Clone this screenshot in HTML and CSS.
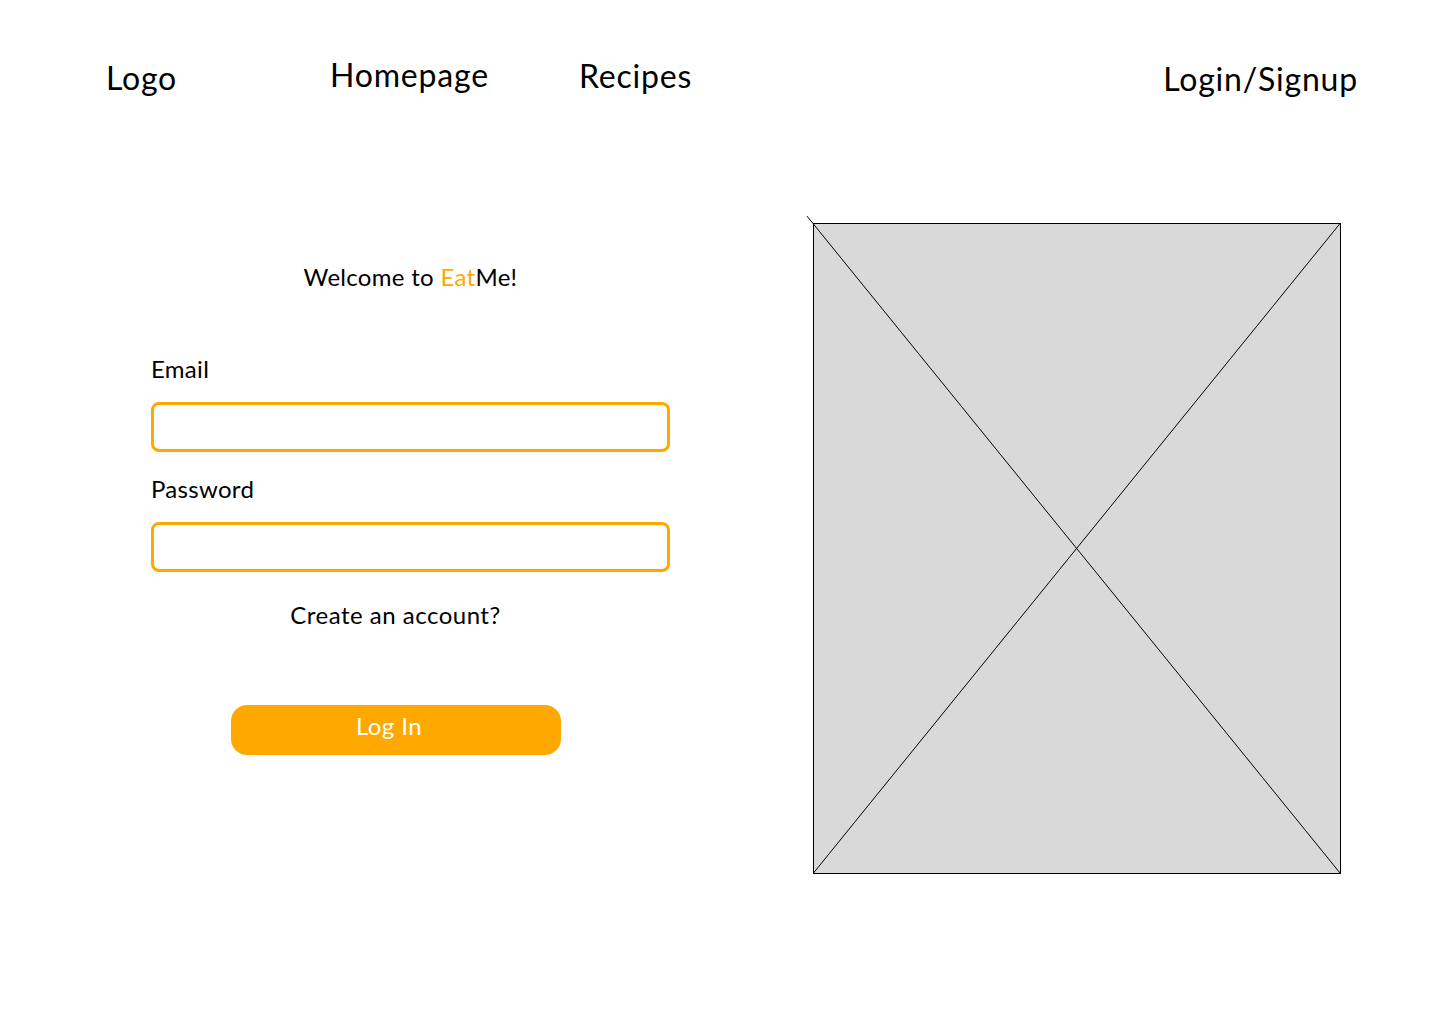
FILE: index.html
```html
<!DOCTYPE html>
<html lang="en">
<head>
<meta charset="utf-8">
<title>EatMe - Login</title>
<link rel="stylesheet" href="styles.css">
</head>
<body>
<header class="topbar">
  <a class="nav-item logo" href="#">Logo</a>
  <a class="nav-item home" href="#">Homepage</a>
  <a class="nav-item recipes" href="#">Recipes</a>
  <a class="nav-item login" href="#">Login/Signup</a>
</header>
<main class="content">
  <section class="form-col">
    <h1 class="welcome">Welcome to <span class="brand">Eat</span>Me!</h1>
    <form class="login-form">
      <label class="field-label" for="email">Email</label>
      <input class="field-input" id="email" type="email">
      <label class="field-label" for="password">Password</label>
      <input class="field-input" id="password" type="password">
      <div class="actions">
        <a class="create-link" href="#">Create an account?</a>
        <button class="login-btn" type="button">Log In</button>
      </div>
    </form>
  </section>
  <section class="image-col">
    <svg class="placeholder" width="528" height="651" viewBox="0 0 528 651">
      <rect x="0.5" y="0.5" width="527" height="650" fill="#D9D9D9" stroke="#000" stroke-width="1"/>
      <line x1="-6" y1="-6.9" x2="527" y2="650" stroke="#000" stroke-width="1"/>
      <line x1="527" y1="0.5" x2="0.5" y2="650" stroke="#000" stroke-width="1"/>
    </svg>
  </section>
</main>
</body>
</html>
```
FILE: styles.css
```css
html, body {
  margin: 0;
  padding: 0;
  background: #fff;
}
body {
  font-family: "Lato", "Open Sans", sans-serif;
  color: #000;
  width: 1440px;
  height: 1024px;
  overflow: hidden;
}
a { color: inherit; text-decoration: none; }

.topbar {
  display: flex;
  align-items: flex-start;
  padding: 56px 83px 0 106px;
  height: 150px;
  box-sizing: border-box;
}
.nav-item {
  font-size: 32px;
  line-height: 44px;
  letter-spacing: 0.8px;
}
.home { margin-left: 153px; margin-top: -3px; }
.recipes { margin-left: 90px; margin-top: -2px; }
.login { margin-left: auto; margin-top: 1px; margin-right: -1px; }

.content {
  display: flex;
  align-items: flex-start;
}
.form-col {
  margin-left: 151px;
  width: 519px;
  padding-top: 112px;
}
.welcome {
  margin: 0;
  font-size: 24px;
  font-weight: 400;
  line-height: 30px;
  text-align: center;
  letter-spacing: 0.3px;
}
.brand { color: #FFA800; }

.login-form {
  display: flex;
  flex-direction: column;
  margin-top: 62px;
}
.field-label {
  font-size: 24px;
  line-height: 30px;
  margin-bottom: 18px;
  letter-spacing: 0.3px;
}
.field-input {
  box-sizing: border-box;
  width: 519px;
  height: 50px;
  border: 3px solid #FFA800;
  border-radius: 8px;
  margin: 0 0 22px 0;
  padding: 0 10px;
  font: inherit;
  outline: none;
}
.actions {
  width: 489px;
  display: flex;
  flex-direction: column;
  align-items: center;
}
.create-link {
  font-size: 24px;
  line-height: 30px;
  margin-top: 6px;
  letter-spacing: 0.5px;
}
.login-btn {
  margin-top: 75px;
  width: 330px;
  height: 50px;
  border: none;
  border-radius: 16px;
  background: #FFA800;
  color: #fff;
  font-family: inherit;
  font-size: 24px;
  letter-spacing: 0.4px;
  padding: 0 14px 10px 0;
  margin-left: 1px;
}

.image-col {
  margin-left: 143px;
  padding-top: 73px;
}
.placeholder {
  display: block;
  overflow: visible;
}
```
